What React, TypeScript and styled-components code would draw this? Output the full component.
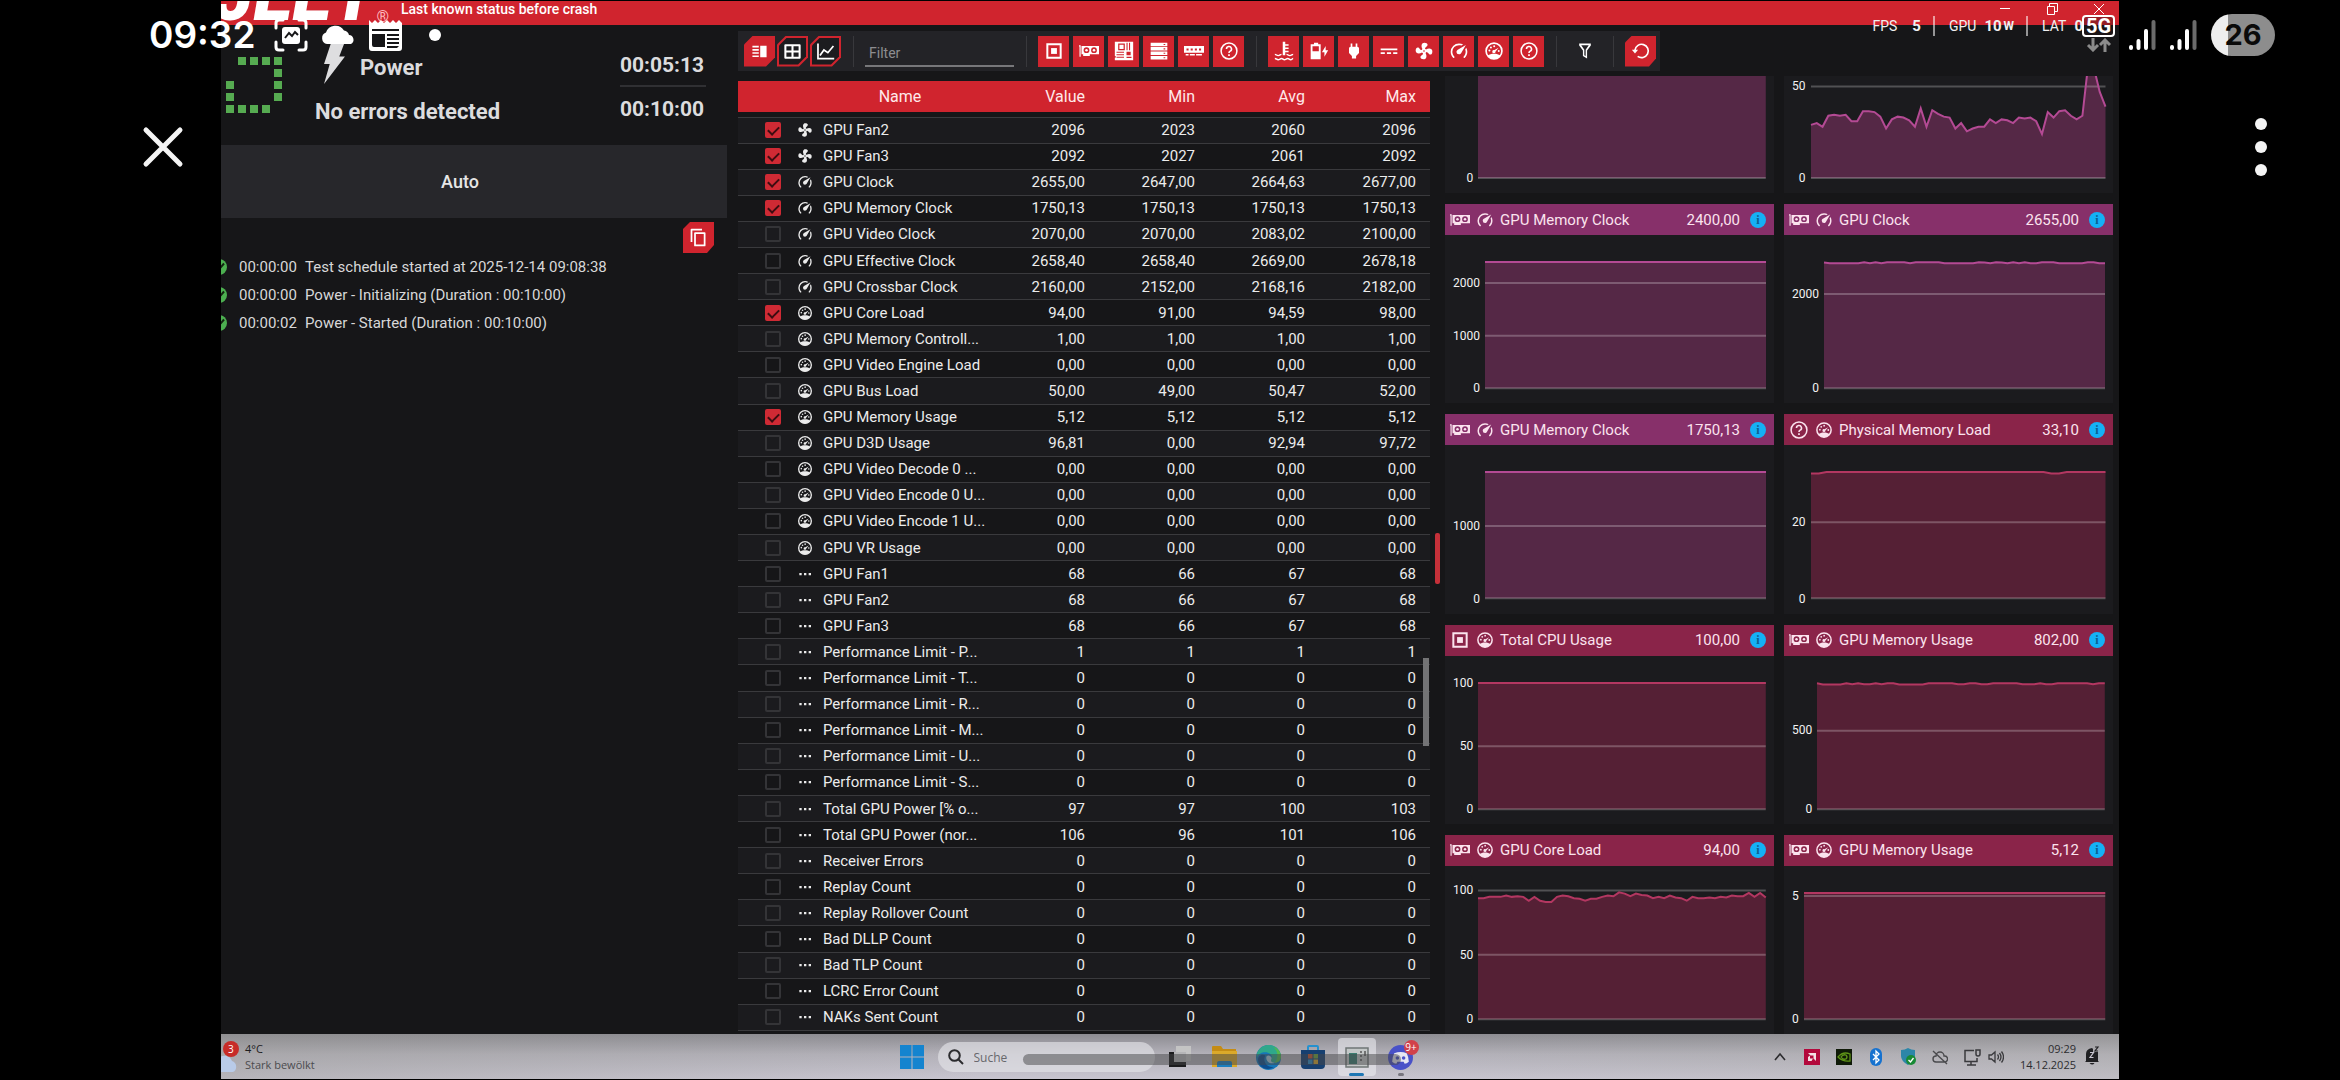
import React from 'react';
import styled, { createGlobalStyle, css } from 'styled-components';

const red = '#d0242e';
const ink = '#161618';

const Global = createGlobalStyle`
  * { box-sizing: border-box; }
  html, body { margin: 0; background: #000; }
  body { font-family: Roboto, "Liberation Sans", sans-serif; color: #e6e6e6; overflow: hidden; }
  button { font: inherit; color: inherit; border: 0; padding: 0; background: none; }
  svg { display: block; flex: none; }
`;

/* ---------- icons ---------- */

type IconName =
  | 'cpu' | 'gpu' | 'board' | 'drive' | 'ram' | 'help' | 'temp' | 'battery' | 'plug' | 'dc'
  | 'fan' | 'clock' | 'load' | 'filter' | 'reset' | 'copy' | 'list' | 'grid' | 'line' | 'dots';

const shapes: Record<IconName, React.ReactNode> = {
  cpu: (
    <>
      <path d="M4 4h16v16H4z" fill="none" stroke="currentColor" strokeWidth="2.4" />
      <path d="M8.5 8.5h7v7h-7z" />
    </>
  ),
  gpu: (
    <>
      <path d="M0 5h2v14H0.600V6.500H0z" />
      <path fillRule="evenodd" d="M3 6h21v10H13v2H5v-2H3zM9 7.500a3.500 3.500 0 1 0 0 7a3.500 3.500 0 1 0 0-7M18 7.500a3.500 3.500 0 1 0 0 7a3.500 3.500 0 1 0 0-7" />
      <circle cx="9" cy="11" r="1.500" />
      <circle cx="18" cy="11" r="1.500" />
    </>
  ),
  board: (
    <path
      fillRule="evenodd"
      d="M1 1h22v22H1v-3h1v-2H1zM5 3v8h8V3zM6.500 4.500h5v5h-5zM15 2v9h1.300V2zM18 2v9h1.300V2zM3 13v1.200h9V13zM3 16v1.200h9V16zM3 19v1.200h9V19zM15 13v4h5v-4zM15 19v1.500h6V19z"
    />
  ),
  drive: (
    <path
      fillRule="evenodd"
      d="M2 2h20v4.200H2zM2 7.300h20v4.200H2zM2 12.600h20v4.200H2zM2 17.900h20v4.200H2zM17.500 3.500v1.300h2V3.500zM17.500 8.800v1.300h2V8.800zM17.500 14.100v1.300h2v-1.300zM17.500 19.400v1.300h2v-1.300z"
    />
  ),
  ram: (
    <path
      fillRule="evenodd"
      d="M0 6h24v8H0zM3 9v2.500h2.500V9zM8 9v2.500h2.500V9zM13 9v2.500h2.500V9zM18 9v2.500h2.500V9zM2 15.500h3.500V17.500H2zM7 15.500h6V17.500H7zM14.500 15.500h7V17.500h-7z"
    />
  ),
  help: (
    <>
      <circle cx="12" cy="12" r="9.500" fill="none" stroke="currentColor" strokeWidth="1.800" />
      <path d="M9 9.600a3 3 0 1 1 4.400 2.600c-1 .6-1.400 1-1.400 2.300" fill="none" stroke="currentColor" strokeWidth="1.900" />
      <path d="M11 16h2v2h-2z" />
    </>
  ),
  temp: (
    <>
      <path d="M10.500 1h3v3h4v1.800h-4v2h4v1.800h-4v2h4v1.800h-4V17h-3z" />
      <path
        d="M1 16c2 0 2 1.500 4 1.500S7.500 16 9 16M15 16c2 0 2 1.500 4 1.500s2.500-1.500 4-1.500M1 21c2 0 2.200 1.500 4 1.500S7.500 21 9 21s2 1.500 3.500 1.500S15 21 16.500 21s2 1.500 3.500 1.500S22 21 23 21"
        fill="none"
        stroke="currentColor"
        strokeWidth="1.700"
      />
    </>
  ),
  battery: (
    <>
      <path fillRule="evenodd" d="M6 2h5v2h3v18H2V4h4zM4.200 6.200v6h7.600v-6z" />
      <path d="M20 6l-4.500 7.500h3V19l4.500-8h-3z" />
    </>
  ),
  plug: <path d="M16 7V3h-2v4h-4V3H8v4C7 7 6 8 6 9v5.500L9.500 18v3h5v-3l3.500-3.500V9c0-1-1-2-2-2z" />,
  dc: <path d="M2 9h20v2H2zM2 13.500h5v2H2zM9.500 13.500h5v2h-5zM17 13.500h5v2h-5z" />,
  fan: (
    <path d="M12 11a1 1 0 0 0-1 1a1 1 0 0 0 1 1a1 1 0 0 0 1-1a1 1 0 0 0-1-1M12.500 2C17 2 17.110 5.570 14.750 6.750C13.760 7.240 13.320 8.290 13.130 9.220C13.610 9.420 14.030 9.730 14.350 10.130C18.050 8.130 22.030 8.920 22.030 12.500C22.030 17 18.460 17.100 17.280 14.730C16.780 13.740 15.720 13.300 14.790 13.110C14.590 13.590 14.280 14 13.880 14.340C15.870 18.030 15.080 22 11.500 22C7 22 6.910 18.420 9.270 17.240C10.250 16.750 10.690 15.710 10.890 14.790C10.400 14.590 9.970 14.270 9.650 13.870C5.960 15.850 2 15.070 2 11.500C2 7 5.560 6.890 6.740 9.260C7.240 10.250 8.290 10.680 9.220 10.870C9.410 10.390 9.730 9.970 10.140 9.650C8.150 5.960 8.940 2 12.500 2Z" />
  ),
  clock: (
    <path d="M12 16A3 3 0 0 1 9 13C9 11.880 9.610 10.900 10.500 10.390L20.210 4.770L14.680 14.350C14.180 15.330 13.170 16 12 16M12 3C13.810 3 15.500 3.500 16.970 4.320L14.870 5.530C14 5.190 13 5 12 5A8 8 0 0 0 4 13C4 15.210 4.890 17.210 6.340 18.650C6.740 19.040 6.740 19.670 6.350 20.060C5.960 20.450 5.320 20.450 4.930 20.070C3.120 18.260 2 15.760 2 13A10 10 0 0 1 12 3M22 13C22 15.760 20.880 18.260 19.070 20.070C18.680 20.450 18.050 20.450 17.660 20.060C17.270 19.670 17.270 19.040 17.660 18.650C19.110 17.200 20 15.210 20 13C20 12 19.810 11 19.460 10.100L20.670 8C21.500 9.500 22 11.180 22 13Z" />
  ),
  load: (
    <>
      <circle cx="12" cy="12" r="9.500" fill="none" stroke="currentColor" strokeWidth="2" />
      <path d="M4.500 17.500c2-1.500 4.500-2.200 7.500-2.200s5.500.7 7.500 2.200c-1.800 2.500-4.500 4-7.500 4s-5.700-1.500-7.500-4z" />
      <path d="M17.500 8.200l-3.600 4.400a2 2 0 1 1-1.300-1.700z" />
      <circle cx="6.500" cy="11.500" r="1.200" />
      <circle cx="8.300" cy="7.800" r="1.200" />
      <circle cx="12.200" cy="6.200" r="1.200" />
      <circle cx="17.700" cy="12" r="1.200" />
    </>
  ),
  filter: <path d="M5 3h14v2.500l-4.500 6V21l-5-3v-6.500L5 5.500zM7.500 5l3.700 5.500V17l1.600 1v-7.500L16.500 5z" fillRule="evenodd" />,
  reset: (
    <>
      <path d="M4.800 11a8 8 0 1 1 3.200 7.400" fill="none" stroke="currentColor" strokeWidth="2" />
      <path d="M1 10.500h7.500L4.800 15z" />
    </>
  ),
  copy: (
    <path d="M4 17V3h12M8 7h11v14H8z" fill="none" stroke="currentColor" strokeWidth="2" strokeLinejoin="round" />
  ),
  list: <path d="M2 4h9v2.300H2zM2 8.500h9v2.300H2zM2 13h9v2.300H2zM2 17.500h9v2.300H2zM13 4h9v16h-9z" />,
  grid: (
    <path d="M3 4h18v16H3zM12 4v16M3 12h18" fill="none" stroke="currentColor" strokeWidth="2.600" strokeLinejoin="round" />
  ),
  line: <path d="M2.500 2v19H23M5 17l5-7 5 3.500L22 5" fill="none" stroke="currentColor" strokeWidth="2.200" />,
  dots: <path d="M3.500 10.500h3.500v3.500H3.500zM10.500 10.500H14v3.500h-3.500zM17.500 10.500H21v3.500h-3.500z" />,
};

const Icon = ({ name, size = 20 }: { name: IconName; size?: number }) => (
  <svg width={size} height={size} viewBox="0 0 24 24" fill="currentColor" aria-hidden>
    {shapes[name]}
  </svg>
);

/* ---------- shell ---------- */

const Screen = styled.div`
  position: relative;
  height: 100vh;
  padding: 1px 221px;
  background: #000;
  overflow: hidden;
`;

const Desktop = styled.div`
  display: flex;
  flex-direction: column;
  height: 100%;
  overflow: hidden;
  background: ${ink};
`;

const TitleBar = styled.header`
  flex: none;
  display: flex;
  height: 24px;
  overflow: hidden;
  background: ${red};
  color: #fff;
`;

const Logo = styled.div`
  display: flex;
  align-items: flex-end;
  justify-content: flex-end;
  width: 168px;
  height: 24px;
  overflow: hidden;
  color: #fff;
  font: italic 900 72px/58px Roboto, sans-serif;
  sup { font: 400 16px/16px Roboto, sans-serif; color: #ffb9bd; }
`;

const Caption = styled.h1`
  flex: 1;
  margin: 0;
  padding-left: 12px;
  font-size: 14px;
  font-weight: 500;
  line-height: 16px;
`;

const WindowButtons = styled.div`
  display: flex;
  align-items: flex-start;
  gap: 35px;
  padding: 2px 14px 0 0;
  button { height: 12px; }
`;

const Body = styled.main`
  flex: 1;
  min-height: 0;
  display: grid;
  grid-template-columns: 506fr 11px 692fr 15px 668fr 6px;
  grid-template-rows: 40px minmax(0, 1fr);
  padding-top: 6px;
`;

/* ---------- left panel ---------- */

const TestPanel = styled.section`
  grid-column: 1;
  grid-row: 1 / 3;
  display: flex;
  flex-direction: column;
  overflow: hidden;
`;

const Summary = styled.div`
  display: grid;
  grid-template-columns: 89px 1fr 86px;
  height: 114px;
  padding: 16px 21px 0 5px;
  font-size: 22px;
  font-weight: 700;
  color: #dcdcde;
`;

const Spinner = styled.svg`
  margin-top: 10px;
`;

const Status = styled.div`
  display: flex;
  flex-direction: column;
  gap: 12px;
  line-height: 32px;
`;

const TestName = styled.div`
  display: flex;
  gap: 12px;
  align-items: flex-end;
  height: 37px;
  padding-left: 6px;
`;

const Timers = styled.div`
  display: flex;
  flex-direction: column;
  font-size: 21px;
  line-height: 36px;
  span + span { border-top: 2px solid #303033; padding-top: 4px; }
  span { height: 38px; }
`;

const Mode = styled.div`
  height: 73px;
  padding-right: 28px;
  background: #27272b;
  font-size: 18px;
  font-weight: 500;
  line-height: 73px;
  text-align: center;
`;

const Actions = styled.div`
  display: flex;
  justify-content: flex-end;
  padding: 4px 13px 0 0;
`;

const Log = styled.ol`
  margin: 0;
  padding: 0;
  list-style: none;
  li {
    display: flex;
    align-items: center;
    height: 28px;
    font-size: 15px;
    color: #d8d8d8;
  }
  time { width: 66px; }
  svg { margin: 0 12px 0 -10px; }
`;

/* ---------- toolbar ---------- */

const Toolbar = styled.nav`
  grid-column: 3 / 6;
  display: flex;
  align-items: center;
  justify-self: start;
  padding: 0 4px 0 6px;
  background: #232327;
  height: 40px;
`;

const Group = styled.div<{ $gap?: number }>`
  display: flex;
  gap: ${(p) => p.$gap ?? 4}px;
`;

const Divider = styled.span`
  width: 1px;
  height: 31px;
  margin: 0 11px 0 12px;
  background: #38383c;
`;

const Tile = styled.button<{ $shape?: 'cut' | 'end'; $outline?: boolean }>`
  position: relative;
  display: grid;
  place-items: center;
  width: 31px;
  height: 31px;
  background: ${red};
  color: #fff;
  svg { position: relative; }
  ${(p) => p.$shape === 'cut' && css`clip-path: polygon(9px 0, 100% 0, 100% 22px, 22px 100%, 0 100%, 0 9px);`}
  ${(p) => p.$shape === 'end' && css`clip-path: polygon(7px 0, 100% 0, 100% 23px, 24px 100%, 0 100%, 0 7px);`}
  ${(p) => p.$outline && css`
    &::before {
      content: '';
      position: absolute;
      inset: 2px;
      background: #1c1c1f;
      clip-path: polygon(8px 0, 100% 0, 100% 19px, 19px 100%, 0 100%, 0 8px);
    }
  `}
`;

const FilterInput = styled.input`
  width: 149px;
  height: 26px;
  margin-top: 6px;
  padding: 0 4px;
  border: 0;
  border-bottom: 2px solid #77777a;
  background: transparent;
  color: #fff;
  font: 14px Roboto, sans-serif;
  &::placeholder { color: #8d8d90; }
`;

const FunnelButton = styled.button`
  width: 33px;
  display: grid;
  place-items: center;
  color: #fff;
`;

/* ---------- sensor table ---------- */

const TableWrap = styled.section`
  grid-column: 3;
  grid-row: 2;
  position: relative;
  min-height: 0;
  padding: 10px 0 3px;
`;

const Table = styled.table`
  width: 100%;
  height: 100%;
  border-collapse: collapse;
  table-layout: fixed;
  font-size: 15px;
  line-height: 18px;
  color: #ececec;
  th {
    height: 31px;
    padding: 0 14px 0 0;
    background: ${red};
    color: #ffe9ea;
    font-weight: 400;
    font-size: 16px;
    text-align: right;
  }
  th:nth-child(3) { text-align: center; padding-right: 12px; }
  td { height: 26px; padding: 0; border-bottom: 1px solid #3a3a3d; white-space: nowrap; }
  tbody tr:nth-child(even) td { background: #1b1b1e; }
  tbody tr:first-child td { height: 5px; }
`;

const Num = styled.td`
  && { text-align: right; padding-right: 14px; }
`;

const Center = styled.span`
  display: flex;
  justify-content: center;
  padding-right: 4px;
`;

const Check = styled.input`
  appearance: none;
  display: block;
  width: 16px;
  height: 16px;
  margin: 0 0 0 27px;
  border: 2px solid #343437;
  border-radius: 2px;
  background: transparent;
  &:checked { border-color: #cf2a34; background: #cf2a34; }
  &:checked::after {
    content: '';
    display: block;
    width: 9px;
    height: 5px;
    margin: 2px 1px;
    border: solid #3c0d11;
    border-width: 0 0 2px 2px;
    transform: rotate(-45deg);
  }
`;

const ScrollThumb = styled.div`
  position: absolute;
  right: 1px;
  top: 61%;
  width: 6px;
  height: 88px;
  background: #737375;
`;

const Splitter = styled.div`
  grid-column: 4;
  grid-row: 2;
  align-self: center;
  width: 5px;
  height: 51px;
  margin: 12px 0 0 5px;
  border-radius: 2px;
  background: #c53039;
`;

/* ---------- charts ---------- */

const Charts = styled.section`
  grid-column: 5;
  grid-row: 2;
  display: grid;
  grid-template-columns: 1fr 1fr;
  grid-template-rows: 117px repeat(4, minmax(199px, 1fr));
  gap: 11px 10px;
  min-height: 0;
  margin-top: 5px;
  overflow: hidden;
`;

const Card = styled.article`
  display: flex;
  flex-direction: column;
  min-height: 0;
  overflow: hidden;
  background: #1b1b1e;
`;

const CardHead = styled.header<{ $color: string }>`
  flex: none;
  display: flex;
  align-items: center;
  gap: 6px;
  height: 31px;
  padding: 0 8px 0 5px;
  background: ${(p) => p.$color};
  color: #fbe3ee;
  font-size: 15px;
  h2 { flex: 1; margin: 0; font-size: 15px; font-weight: 400; }
  span { margin-right: 4px; }
`;

const Slot = styled.i`
  display: grid;
  place-items: center;
  width: 20px;
  & + & { width: 18px; }
`;

const Info = styled.button`
  width: 16px;
  height: 16px;
  border-radius: 50%;
  background: #14b1f5;
  color: #0b5f92;
  && { font: 700 12px/16px "Liberation Serif", serif; }
`;

const Plot = styled.div<{ $clipped: boolean }>`
  flex: 1;
  min-height: 0;
  display: flex;
  gap: 5px;
  padding: ${(p) => (p.$clipped ? 0 : 27)}px 8px 15px;
`;

const Axis = styled.div`
  align-self: flex-end;
  display: flex;
  flex-direction: column;
  justify-content: space-between;
  text-align: right;
  font-size: 12px;
  color: #f2f2f2;
  span { height: 0; line-height: 0; }
`;

const Area = styled.svg`
  flex: 1;
  min-width: 0;
  height: 100%;
  overflow: visible;
`;

type Series = {
  title?: string;
  value?: string;
  icons?: [IconName, IconName];
  tone: 'purple' | 'rose';
  max: number;
  ticks: number[];
  data: number[];
  clipped?: boolean;
};

const tones = {
  purple: { head: '#87306a', fill: '#552846', line: '#b44a94' },
  rose: { head: '#8a2449', fill: '#552035', line: '#b33761' },
};

const flat = (v: number) => [v, v];

const series: Series[] = [
  { tone: 'purple', max: 193, ticks: [200, 0], data: flat(230), clipped: true },
  {
    tone: 'purple', max: 55.7, ticks: [50, 0], clipped: true,
    data: [29, 30, 28, 34, 34.5, 34, 34.5, 31, 31, 36.500, 36.500, 36, 33.500, 27, 32, 33.500, 33, 31.500, 28, 38, 28, 37, 35, 33.500, 33, 27, 30, 25.500, 27, 28, 28, 32, 30, 32, 31.500, 30, 33, 32.500, 33, 31, 24, 36, 33, 36.500, 37, 34, 32, 34, 62, 60, 47, 39],
  },
  { title: 'GPU Memory Clock', value: '2400,00', icons: ['gpu', 'clock'], tone: 'purple', max: 2400, ticks: [2000, 1000, 0], data: flat(2400) },
  {
    title: 'GPU Clock', value: '2655,00', icons: ['gpu', 'clock'], tone: 'purple', max: 2680, ticks: [2000, 0],
    data: [2670, 2655, 2655, 2655, 2655, 2655, 2655, 2675, 2655, 2675, 2655, 2675, 2675, 2675, 2675, 2655, 2675, 2675, 2675, 2675, 2675, 2655, 2655, 2655, 2655, 2655, 2655, 2675, 2670, 2655, 2675, 2670, 2655, 2675, 2655, 2675, 2655, 2655, 2675, 2675, 2675, 2655, 2655, 2655, 2655, 2655, 2675, 2675, 2655, 2655],
  },
  { title: 'GPU Memory Clock', value: '1750,13', icons: ['gpu', 'clock'], tone: 'purple', max: 1750, ticks: [1000, 0], data: flat(1750) },
  {
    title: 'Physical Memory Load', value: '33,10', icons: ['help', 'load'], tone: 'rose', max: 33.200, ticks: [20, 0],
    data: [32.800, 32.800, 33.200, 33.200, 33.200, 33.200, 33.200, 33.200, 33.200, 33.200, 33.200, 33.200, 33.200, 33.200, 33.200, 33.200, 33.200, 33.200, 33.200, 33.200, 33.200, 33.200, 33.200, 33.200, 33.200, 33.200, 33.200, 33.200, 33.200, 33.200, 33.200, 32.800, 32.800, 33.200, 33.200, 33.200, 33.200, 33.200, 33.200],
  },
  { title: 'Total CPU Usage', value: '100,00', icons: ['cpu', 'load'], tone: 'rose', max: 100, ticks: [100, 50, 0], data: flat(100) },
  {
    title: 'GPU Memory Usage', value: '802,00', icons: ['gpu', 'load'], tone: 'rose', max: 804, ticks: [500, 0],
    data: [802, 795, 795, 795, 795, 802, 796, 802, 796, 796, 802, 796, 802, 802, 795, 795, 795, 795, 795, 802, 802, 802, 802, 802, 796, 796, 802, 802, 796, 796, 802, 802, 802, 802, 802, 796, 796, 796, 802, 796, 796, 802, 802, 802, 802, 802, 802, 796, 802, 802],
  },
  {
    title: 'GPU Core Load', value: '94,00', icons: ['gpu', 'load'], tone: 'rose', max: 98, ticks: [100, 50, 0],
    data: [94, 94, 95, 95, 95, 96, 95, 95.500, 95, 92, 95, 92, 91, 91, 95, 96, 95.500, 94, 93.500, 92, 93.500, 93.500, 95, 96, 95.500, 98.500, 97.500, 95.500, 97.500, 96.500, 96, 94, 95, 94, 96, 94.500, 94, 92, 95, 94, 94, 94.500, 94, 95, 94.500, 96, 95.500, 95.500, 98, 95, 98, 94.500],
  },
  { title: 'GPU Memory Usage', value: '5,12', icons: ['gpu', 'load'], tone: 'rose', max: 5.120, ticks: [5, 0], data: flat(5.120) },
];

function Chart({ title, value, icons, tone, max, ticks, data, clipped = false }: Series) {
  const t = tones[tone];
  const y = (v: number) => 100 - (v / max) * 100;
  const points = data.map((v, i) => `${(i / (data.length - 1)) * 100},${y(v)}`).join(' ');
  return (
    <Card>
      {title && icons && (
        <CardHead $color={t.head}>
          <Slot><Icon name={icons[0]} size={20} /></Slot>
          <Slot><Icon name={icons[1]} size={18} /></Slot>
          <h2>{title}</h2>
          <span>{value}</span>
          <Info aria-label={`About ${title}`}>i</Info>
        </CardHead>
      )}
      <Plot $clipped={clipped}>
        <Axis style={{ height: `${(ticks[0] / max) * 100}%` }}>
          {ticks.map((tick) => <span key={tick}>{tick}</span>)}
        </Axis>
        <Area viewBox="0 0 100 100" preserveAspectRatio="none" aria-hidden>
          <polygon points={`0,100 ${points} 100,100`} fill={t.fill} />
          {ticks.map((tick) => (
            <line key={tick} x1="0" x2="100" y1={y(tick)} y2={y(tick)} stroke="#fff" strokeOpacity="0.24" strokeWidth="2" vectorEffect="non-scaling-stroke" />
          ))}
          <polyline points={points} fill="none" stroke={t.line} strokeWidth="2" vectorEffect="non-scaling-stroke" />
        </Area>
      </Plot>
    </Card>
  );
}

/* ---------- table data ---------- */

type Row = [icon: IconName, name: string, value: string, min: string, avg: string, max: string, on?: boolean];

const zero = (icon: IconName, name: string, v = '0'): Row => [icon, name, v, v, v, v];

const rows: Row[] = [
  ['fan', 'GPU Fan2', '2096', '2023', '2060', '2096', true],
  ['fan', 'GPU Fan3', '2092', '2027', '2061', '2092', true],
  ['clock', 'GPU Clock', '2655,00', '2647,00', '2664,63', '2677,00', true],
  ['clock', 'GPU Memory Clock', '1750,13', '1750,13', '1750,13', '1750,13', true],
  ['clock', 'GPU Video Clock', '2070,00', '2070,00', '2083,02', '2100,00'],
  ['clock', 'GPU Effective Clock', '2658,40', '2658,40', '2669,00', '2678,18'],
  ['clock', 'GPU Crossbar Clock', '2160,00', '2152,00', '2168,16', '2182,00'],
  ['load', 'GPU Core Load', '94,00', '91,00', '94,59', '98,00', true],
  zero('load', 'GPU Memory Controll...', '1,00'),
  zero('load', 'GPU Video Engine Load', '0,00'),
  ['load', 'GPU Bus Load', '50,00', '49,00', '50,47', '52,00'],
  ['load', 'GPU Memory Usage', '5,12', '5,12', '5,12', '5,12', true],
  ['load', 'GPU D3D Usage', '96,81', '0,00', '92,94', '97,72'],
  zero('load', 'GPU Video Decode 0 ...', '0,00'),
  zero('load', 'GPU Video Encode 0 U...', '0,00'),
  zero('load', 'GPU Video Encode 1 U...', '0,00'),
  zero('load', 'GPU VR Usage', '0,00'),
  ['dots', 'GPU Fan1', '68', '66', '67', '68'],
  ['dots', 'GPU Fan2', '68', '66', '67', '68'],
  ['dots', 'GPU Fan3', '68', '66', '67', '68'],
  zero('dots', 'Performance Limit - P...', '1'),
  zero('dots', 'Performance Limit - T...'),
  zero('dots', 'Performance Limit - R...'),
  zero('dots', 'Performance Limit - M...'),
  zero('dots', 'Performance Limit - U...'),
  zero('dots', 'Performance Limit - S...'),
  ['dots', 'Total GPU Power [% o...', '97', '97', '100', '103'],
  ['dots', 'Total GPU Power (nor...', '106', '96', '101', '106'],
  zero('dots', 'Receiver Errors'),
  zero('dots', 'Replay Count'),
  zero('dots', 'Replay Rollover Count'),
  zero('dots', 'Bad DLLP Count'),
  zero('dots', 'Bad TLP Count'),
  zero('dots', 'LCRC Error Count'),
  zero('dots', 'NAKs Sent Count'),
];

function SensorTable() {
  return (
    <TableWrap>
      <Table>
        <colgroup>
          <col style={{ width: 52 }} />
          <col style={{ width: 33 }} />
          <col />
          <col style={{ width: 110 }} />
          <col style={{ width: 110 }} />
          <col style={{ width: 110 }} />
          <col style={{ width: 111 }} />
        </colgroup>
        <thead>
          <tr><th /><th /><th>Name</th><th>Value</th><th>Min</th><th>Avg</th><th>Max</th></tr>
        </thead>
        <tbody>
          <tr><td colSpan={7} /></tr>
          {rows.map(([icon, name, value, min, avg, max, on], i) => (
            <tr key={i}>
              <td><Check type="checkbox" id={`sensor-${i}`} defaultChecked={!!on} /></td>
              <td><Center><Icon name={icon} size={16} /></Center></td>
              <td><label htmlFor={`sensor-${i}`}>{name}</label></td>
              <Num>{value}</Num>
              <Num>{min}</Num>
              <Num>{avg}</Num>
              <Num>{max}</Num>
            </tr>
          ))}
        </tbody>
      </Table>
      <ScrollThumb />
    </TableWrap>
  );
}

/* ---------- taskbar ---------- */

const Taskbar = styled.footer`
  flex: none;
  display: grid;
  grid-template-columns: 1fr auto 1fr;
  align-items: center;
  height: 45px;
  padding-top: 1px;
  background: linear-gradient(90deg, rgba(150, 150, 145, 0.35), rgba(150, 150, 145, 0) 40%, rgba(150, 150, 145, 0) 60%, rgba(170, 170, 165, 0.3)),
    linear-gradient(#8c8b91, #b3b1b9 45%, #c8c5d0);
  color: #2c2c2f;
  font: 11px/16px "Open Sans", sans-serif;
`;

const Weather = styled.div`
  display: flex;
  align-items: center;
  color: #4b4b4e;
  strong { display: block; color: #1d1d1f; font-weight: 400; }
`;

const WeatherIcon = styled.div`
  width: 24px;
  height: 34px;
  overflow: hidden;
`;

const Apps = styled.div`
  display: flex;
  align-items: center;
  padding-right: 18px;
`;

const Search = styled.label`
  display: flex;
  align-items: center;
  gap: 10px;
  width: 217px;
  height: 30px;
  margin: 0 4px 0 14px;
  padding-left: 10px;
  border-radius: 15px;
  background: rgba(228, 227, 232, 0.65);
  input {
    width: 150px;
    padding: 0;
    border: 0;
    background: none;
    font: 12px "Open Sans", sans-serif;
  }
  input::placeholder { color: #68686c; }
`;

const AppButton = styled.button<{ $active?: boolean }>`
  position: relative;
  display: grid;
  place-items: center;
  width: 38px;
  height: 38px;
  margin: 0 3px;
  border-radius: 4px;
  background: ${(p) => (p.$active ? 'rgba(235,235,240,.6)' : 'transparent')};
`;

const Running = styled.i<{ $wide?: boolean }>`
  position: absolute;
  bottom: 0;
  width: ${(p) => (p.$wide ? 15 : 6)}px;
  height: 3px;
  border-radius: 2px;
  background: ${(p) => (p.$wide ? '#1f77b4' : '#77757e')};
`;

const Badge = styled.b`
  position: absolute;
  top: 2px;
  right: 1px;
  width: 15px;
  height: 15px;
  border-radius: 50%;
  background: #d1414a;
  color: #fff;
  font: 10px/15px "Open Sans", sans-serif;
  text-align: center;
`;

const Tray = styled.div`
  display: flex;
  align-items: center;
  justify-content: flex-end;
  gap: 16px;
  padding-right: 19px;
  text-align: right;
`;

const HomeBar = styled.div`
  position: absolute;
  left: 1023px;
  bottom: 15px;
  width: 378px;
  height: 11px;
  border-radius: 6px;
  background: rgba(70, 70, 72, 0.5);
`;

function TaskbarView() {
  return (
    <Taskbar>
      <Weather>
        <WeatherIcon>
          <svg width="24" height="34" viewBox="0 0 24 34">
            <path d="M-6 32a7 7 0 0 1 3-13a8 8 0 0 1 14 2a6 6 0 0 1 1 11z" fill="#b9cbe8" />
            <circle cx="10" cy="9" r="8" fill="#c72c28" />
            <text x="7" y="13" fontSize="10" fill="#fff">3</text>
          </svg>
        </WeatherIcon>
        <span><strong>4°C</strong>Stark bewölkt</span>
      </Weather>
      <Apps>
        <button aria-label="Start">
          <svg width="24" height="24" viewBox="0 0 24 24" fill="#1484cf">
            <path d="M0 0h11.500v11.500H0zM12.500 0H24v11.500H12.500zM0 12.500h11.500V24H0zM12.500 12.500H24V24H12.500z" />
          </svg>
        </button>
        <Search>
          <svg width="16" height="16" viewBox="0 0 16 16" fill="none" stroke="#2b2b2e" strokeWidth="2">
            <circle cx="6.500" cy="6.500" r="5.300" />
            <path d="M10.500 10.500l4.500 4.500" />
          </svg>
          <input placeholder="Suche" aria-label="Suche" />
        </Search>
        <Group $gap={0}>
          <AppButton aria-label="Task view">
            <svg width="24" height="24" viewBox="0 0 24 24">
              <path d="M7 1h15v15H7z" fill="#c4c4c4" />
              <path d="M0 7h5v10h12v5H0z" fill="#1b1b1d" />
              <path d="M5 7h12v10H5z" fill="#b5b5b7" />
            </svg>
          </AppButton>
          <AppButton aria-label="Explorer">
            <svg width="25" height="24" viewBox="0 0 25 24">
              <path d="M0 2q0-1 1-1h8l2 3h13v18H0z" fill="#c58c14" />
              <path d="M0 6h25v16H0z" fill="#dba92a" />
              <path d="M5 22v-4q0-2 2-2h11q2 0 2 2v4z" fill="#1b7fc0" />
            </svg>
          </AppButton>
          <AppButton aria-label="Edge">
            <svg width="25" height="25" viewBox="0 0 24 24">
              <circle cx="12" cy="12" r="12" fill="#1677b8" />
              <path d="M1 8C3 2 8 0 12 0c8 0 12 6 12 11c0 4-3 6-6 6c-4 0-4-2-3-4c1-3-2-6-6-6c-4 0-7 2-8 5z" fill="#2fa88b" />
              <path d="M17 2c5 2 7 6 7 9c0 4-3 6-6 6c4-5 3-11-1-15z" fill="#56b94d" />
              <path d="M9 10c-3 5 1 12 8 11c-7 5-15 0-15-7c0-3 3-6 7-4z" fill="#0f4c8c" />
              <path d="M10 11c2-2 5 0 5 2c-1 2-1 4 3 4c-4 2-9-1-8-6z" fill="#a9c9d8" />
            </svg>
          </AppButton>
          <AppButton aria-label="Store">
            <svg width="24" height="24" viewBox="0 0 24 24">
              <path d="M7 6V2q0-1 1-1h8q1 0 1 1v4" fill="none" stroke="#2591cf" strokeWidth="2" />
              <path d="M0 5h24v15q0 4-4 4H4q-4 0-4-4z" fill="#163f70" />
              <path d="M7 9h4.500v4.500H7z" fill="#c4532e" />
              <path d="M12.500 9H17v4.500h-4.500z" fill="#6da03a" />
              <path d="M7 14.500h4.500V19H7z" fill="#2b8bc5" />
              <path d="M12.500 14.500H17V19h-4.500z" fill="#d3a52c" />
            </svg>
          </AppButton>
          <AppButton $active aria-label="Monitor">
            <svg width="24" height="21" viewBox="0 0 24 21">
              <path d="M1 1h22v19H1z" fill="#c4c8c8" stroke="#6f7676" strokeWidth="1.500" />
              <path d="M4 6h8v11H4z" fill="#3b7d70" />
              <path d="M15 5h2M15 9h2M15 13h2M20 4v5" stroke="#555" strokeWidth="1.500" />
            </svg>
            <Running $wide />
          </AppButton>
          <AppButton aria-label="Discord">
            <svg width="25" height="25" viewBox="0 0 24 24">
              <circle cx="12" cy="12" r="12" fill="#4951c8" />
              <path d="M6 8q6-2.500 12 0q2 4 2 8q-2 2-4 2l-1-2H9l-1 2q-2 0-4-2q0-4 2-8z" fill="#e6e6f2" />
              <circle cx="9" cy="12.500" r="1.700" fill="#4951c8" />
              <circle cx="15" cy="12.500" r="1.700" fill="#4951c8" />
            </svg>
            <Badge>9+</Badge>
            <Running />
          </AppButton>
        </Group>
      </Apps>
      <Tray>
        <svg width="16" height="16" viewBox="0 0 16 16" fill="none" stroke="#2c2c2f" strokeWidth="1.600"><path d="M3 11l5-6 5 6" /></svg>
        <svg width="16" height="16" viewBox="0 0 16 16">
          <path d="M0 0h16v16H0z" fill="#b3093c" />
          <path d="M4 4h8v8l-2.500-2.500V6.500H6.500zM4 8l2-1.500v3h3L7.500 12H4z" fill="#f3dfe4" />
        </svg>
        <svg width="16" height="16" viewBox="0 0 16 16">
          <path d="M0 0h16v16H0z" fill="#0f1a08" />
          <path d="M2 8q5-6 12-3v7q-7 1-12-4zM5 8q2 3 5 2q2-2 0-4q-3-1-5 2z" fill="none" stroke="#5f9418" strokeWidth="1.300" />
        </svg>
        <svg width="16" height="18" viewBox="0 0 16 18">
          <rect x="2" width="12" height="18" rx="6" fill="#1672cf" />
          <path d="M5 6l6 6-3 3V3l3 3-6 6" fill="none" stroke="#fff" strokeWidth="1.300" />
        </svg>
        <svg width="16" height="18" viewBox="0 0 16 18">
          <path d="M8 0q3 2 7 2v6q0 5-7 9q-7-4-7-9V2q4 0 7-2z" fill="#2c86a8" />
          <circle cx="11" cy="12" r="5" fill="#188a35" />
          <path d="M8.500 12l2 2 3-4" fill="none" stroke="#fff" strokeWidth="1.300" />
        </svg>
        <svg width="16" height="16" viewBox="0 0 16 16" fill="none" stroke="#4a4a4d" strokeWidth="1.400">
          <path d="M4 13a3 3 0 0 1 0-6a4 4 0 0 1 8 0a3 3 0 0 1 1 6zM1 2l14 13" />
        </svg>
        <Group $gap={7}>
          <svg width="17" height="17" viewBox="0 0 17 17" fill="none" stroke="#3a3a3d" strokeWidth="1.500">
            <path d="M10 1.500H1v11h12V9M7 13v3M3 16h9M12 1h4v4q0 2-2 2t-2-2z" />
          </svg>
          <svg width="16" height="16" viewBox="0 0 16 16" fill="none" stroke="#3a3a3d" strokeWidth="1.300">
            <path d="M1 6h2.500L7 3v10L3.500 10H1zM9.500 5.500q2 2.500 0 5M11.500 4q3 4 0 8M13.500 2.500q4 5.500 0 11" />
          </svg>
        </Group>
        <Group $gap={8}>
          <span>09:29<br />14.12.2025</span>
          <svg width="16" height="30" viewBox="0 0 16 30" fill="#202023">
            <path d="M2 20v-7q0-5 6-6l1 1v3h5v9l1 1H1zM5.500 22h5q-2 3-5 0z" />
            <path d="M11 6h3l-3 4h3" fill="none" stroke="#202023" strokeWidth="1.200" />
            <path d="M6 11.500h3.500l-3.500 5h3.500" fill="none" stroke="#c8c5d0" strokeWidth="1.200" />
          </svg>
        </Group>
      </Tray>
    </Taskbar>
  );
}

/* ---------- overlays ---------- */

const Osd = styled.div`
  position: absolute;
  right: 257px;
  top: 14px;
  display: flex;
  align-items: center;
  height: 24px;
  font-size: 14px;
  color: #f0f0f0;
  span { display: flex; align-items: center; gap: 8px; }
  span + span { margin-left: 12px; border-left: 2px solid rgba(255, 255, 255, 0.55); padding-left: 14px; height: 20px; }
  b { font-size: 15px; }
  small { font-size: 12px; font-weight: 700; margin-left: -6px; }
`;

const PhoneStatus = styled.div`
  position: absolute;
  inset: 0 0 auto 0;
  display: flex;
  align-items: center;
  height: 70px;
  padding: 0 65px 0 149px;
  color: #fff;
`;

const PhoneTime = styled.time`
  width: 125px;
  font: 600 37px/44px Inter, sans-serif;
`;

const Notices = styled.div`
  display: flex;
  align-items: center;
  flex: 1;
  gap: 13px;
`;

const Signals = styled.div`
  display: flex;
  align-items: center;
  gap: 14px;
`;

const Network = styled.div`
  display: flex;
  flex-direction: column;
  align-items: center;
  gap: 1px;
  padding-bottom: 4px;
  b {
    width: 33px;
    height: 22px;
    border: 2px solid #fff;
    border-radius: 4px;
    background: rgba(40, 20, 22, 0.35);
    font: 700 20px/18px Roboto, sans-serif;
    text-align: center;
  }
`;

const Battery = styled.div`
  width: 64px;
  height: 42px;
  border-radius: 21px;
  background: linear-gradient(90deg, #eee 26%, #8d8d8d 26%);
  color: #0a0a0a;
  font: 700 29px/42px Inter, sans-serif;
  text-align: center;
`;

const CloseViewer = styled.button`
  position: absolute;
  left: 142px;
  top: 126px;
`;

const MoreButton = styled.button`
  position: absolute;
  right: 73px;
  top: 118px;
`;

const Bars = () => (
  <svg width="27" height="32" viewBox="0 0 27 32" strokeWidth="4" strokeLinecap="round" fill="none">
    <path d="M2 28v1M9.500 22v7M17 12v17" stroke="#fff" />
    <path d="M24.500 3v26" stroke="#6b6b6b" />
  </svg>
);

const lit = [[1, 0], [2, 0], [3, 0], [4, 0], [4, 1], [0, 2], [4, 2], [0, 3], [4, 3], [0, 4], [1, 4], [2, 4], [3, 4]];

const events = [
  ['00:00:00', 'Test schedule started at 2025-12-14 09:08:38'],
  ['00:00:00', 'Power - Initializing (Duration : 00:10:00)'],
  ['00:00:02', 'Power - Started (Duration : 00:10:00)'],
];

const hardware: IconName[] = ['cpu', 'gpu', 'board', 'drive', 'ram', 'help'];
const kinds: IconName[] = ['temp', 'battery', 'plug', 'dc', 'fan', 'clock', 'load', 'help'];

export default function App() {
  return (
    <Screen>
      <Global />
      <Desktop>
        <TitleBar>
          <Logo>JEET<sup>®</sup></Logo>
          <Caption>Last known status before crash</Caption>
          <WindowButtons>
            <button aria-label="Minimize"><svg width="12" height="12" viewBox="0 0 12 12" stroke="#fff"><path d="M1 5.500h10" /></svg></button>
            <button aria-label="Restore"><svg width="12" height="12" viewBox="0 0 12 12" stroke="#fff" fill="none"><path d="M1.500 3.500h7v8h-7zM3.500 3.500v-3h8v8h-3" /></svg></button>
            <button aria-label="Close"><svg width="12" height="12" viewBox="0 0 12 12" stroke="#fff"><path d="M1 1l10 10M11 1L1 11" /></svg></button>
          </WindowButtons>
        </TitleBar>
        <Body>
          <TestPanel>
            <Summary>
              <Spinner width="56" height="56" viewBox="0 0 56 56" fill="#56ab51">
                {lit.map(([x, y]) => <rect key={`${x}${y}`} x={x * 12} y={y * 12} width="8" height="8" />)}
              </Spinner>
              <Status>
                <TestName>
                  <svg width="27" height="40" viewBox="0 0 24 42" fill="#dedee0"><path d="M8 0h14l-5 13h6L1 42l6-21H1z" /></svg>
                  Power
                </TestName>
                No errors detected
              </Status>
              <Timers><span>00:05:13</span><span>00:10:00</span></Timers>
            </Summary>
            <Mode>Auto</Mode>
            <Actions><Tile $shape="end" aria-label="Copy log"><Icon name="copy" size={21} /></Tile></Actions>
            <Log>
              {events.map(([time, text]) => (
                <li key={text}>
                  <svg width="16" height="16" viewBox="0 0 16 16">
                    <circle cx="8" cy="8" r="8" fill="#4caf50" />
                    <path d="M4 8.500l3 3 6-7" fill="none" stroke="#12240f" strokeWidth="2" />
                  </svg>
                  <time>{time}</time>
                  {text}
                </li>
              ))}
            </Log>
          </TestPanel>
          <Toolbar>
            <Group $gap={2}>
              <Tile $shape="cut" aria-label="List view"><Icon name="list" size={17} /></Tile>
              <Tile $shape="cut" $outline aria-label="Grid view"><Icon name="grid" size={19} /></Tile>
              <Tile $shape="cut" $outline aria-label="Chart view"><Icon name="line" size={19} /></Tile>
            </Group>
            <Divider />
            <FilterInput placeholder="Filter" aria-label="Filter" />
            <Divider />
            <Group>{hardware.map((n) => <Tile key={n} aria-label={n}><Icon name={n} /></Tile>)}</Group>
            <Divider />
            <Group>{kinds.map((n) => <Tile key={n} aria-label={n}><Icon name={n} /></Tile>)}</Group>
            <Divider />
            <FunnelButton aria-label="Filter options"><Icon name="filter" /></FunnelButton>
            <Divider />
            <Tile $shape="end" aria-label="Reset"><Icon name="reset" /></Tile>
          </Toolbar>
          <SensorTable />
          <Splitter />
          <Charts>{series.map((s, i) => <Chart key={i} {...s} />)}</Charts>
        </Body>
        <TaskbarView />
      </Desktop>

      <Osd>
        <span>FPS&nbsp;&nbsp;<b>5</b></span>
        <span>GPU <b>10</b><small>W</small></span>
        <span>LAT <b>0</b></span>
      </Osd>
      <HomeBar />
      <PhoneStatus>
        <PhoneTime>09:32</PhoneTime>
        <Notices>
          <svg width="34" height="34" viewBox="0 0 34 34" fill="none" stroke="#fff" strokeWidth="3">
            <path d="M2 10V5q0-3 3-3h4M25 2h4q3 0 3 3v5M32 24v5q0 3-3 3h-4M9 32H5q-3 0-3-3v-5" strokeLinecap="round" />
            <rect x="8" y="9" width="18" height="17" rx="3" fill="#fff" stroke="none" />
            <path d="M11 20l4-5 3 3 3-4 3 3" stroke="#161618" strokeWidth="2" />
          </svg>
          <svg width="35" height="22" viewBox="0 0 35 22" fill="#fff"><path d="M6 20a6 6 0 0 1-1-11.500A10 10 0 0 1 23 6.500A6 6 0 0 1 28 11a4.800 4.800 0 0 1 2 9z" /></svg>
          <svg width="33" height="32" viewBox="0 0 33 32">
            <path fill="#fff" fillRule="evenodd" d="M0 1l3 3 3-3 3 3 3-3 3 3 3-3 3 3 3-3 3 3 3-3 3 3v25q0 3-3 3H3q-3 0-3-3zM3 10v2h27v-2zM3 15v11q0 2 2 2h11V15zM18 15v2h12v-2zM18 19v2h12v-2zM18 23v2h12v-2zM18 27v2h10l2-2z" />
          </svg>
          <svg width="34" height="14" viewBox="0 0 34 14" fill="#fff"><circle cx="20" cy="7" r="6" /></svg>
        </Notices>
        <Signals>
          <Network>
            <b>5G</b>
            <svg width="26" height="14" viewBox="0 0 26 14" fill="none" stroke="#8b8b8b" strokeWidth="3"><path d="M7 0v12M2 7l5 5 5-5M19 14V2M14 7l5-5 5 5" /></svg>
          </Network>
          <Bars />
          <Bars />
          <Battery>26</Battery>
        </Signals>
      </PhoneStatus>
      <CloseViewer aria-label="Close viewer">
        <svg width="42" height="42" viewBox="0 0 42 42" stroke="#f4f4f4" strokeWidth="5" strokeLinecap="round"><path d="M4 4l34 34M38 4L4 38" /></svg>
      </CloseViewer>
      <MoreButton aria-label="More options">
        <svg width="12" height="58" viewBox="0 0 12 58" fill="#f4f4f4"><circle cx="6" cy="6" r="6" /><circle cx="6" cy="29" r="6" /><circle cx="6" cy="52" r="6" /></svg>
      </MoreButton>
    </Screen>
  );
}
